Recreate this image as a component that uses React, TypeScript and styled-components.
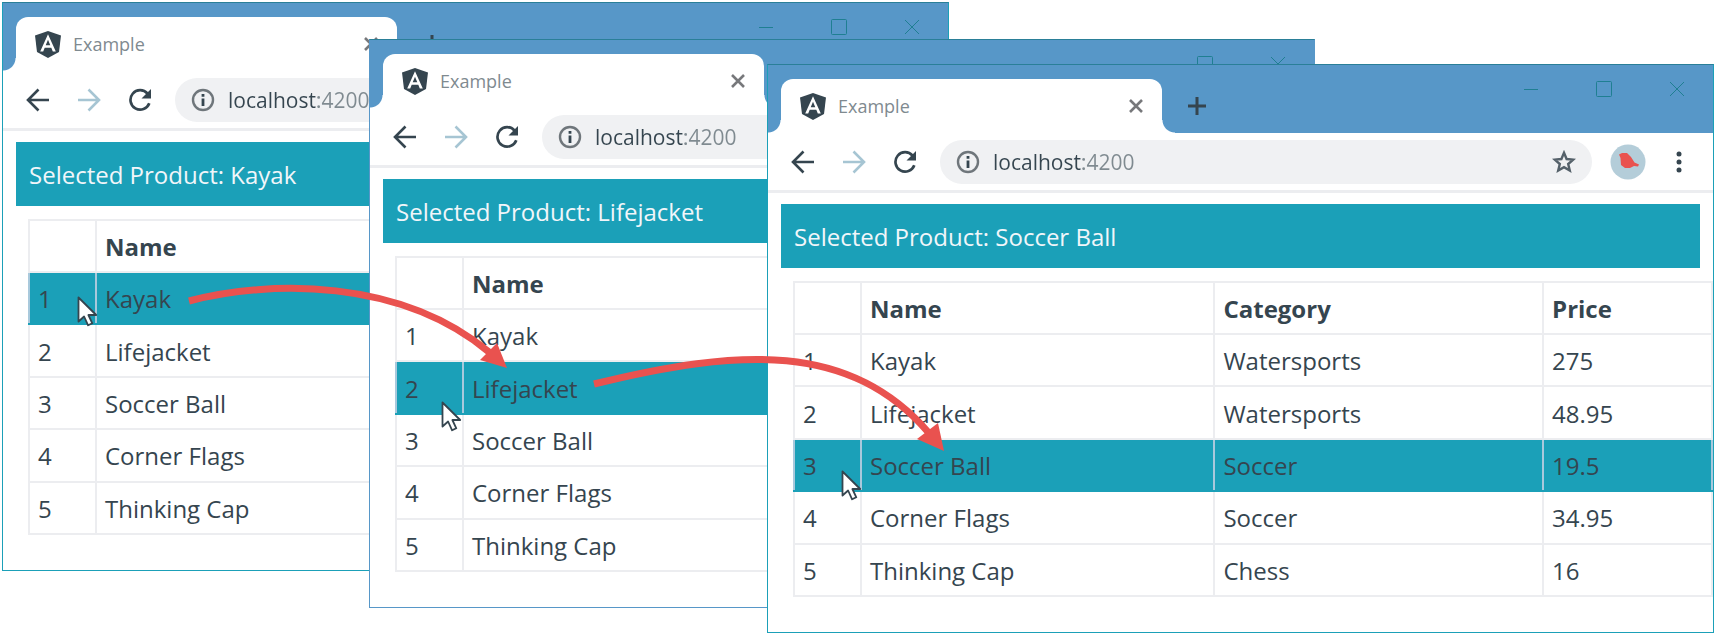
import React from "react";
import styled, { createGlobalStyle, css } from "styled-components";

const color = {
  ink: "#35454f",
  muted: "#7f8a90",
  pale: "#a6c5d3",
  frame: "#5797c8",
  teal: "#1ba0b8",
  line: "#ecedf0",
  field: "#f0f1f3",
  arrow: "#e9524f",
};

const GlobalStyle = createGlobalStyle`
  *, *::before, *::after { box-sizing: border-box; }
  body {
    margin: 0;
    background: #fff;
    color: ${color.ink};
    font-family: "Open Sans", "Noto Sans", sans-serif;
  }
  button { padding: 0; border: 0; background: none; color: inherit; font: inherit; }
`;

const Stage = styled.main`
  position: relative;
  display: grid;
  grid-template-columns: 367fr 398fr 182fr 366fr 399fr;
  align-items: start;
  padding: 2px;
`;

const BrowserFrame = styled.section<{ $start: number; $drop: number; $edge: string }>`
  isolation: isolate;
  grid-row: 1;
  grid-column: ${(p) => p.$start} / span 3;
  margin-top: ${(p) => p.$drop}px;
  min-width: 0;
  overflow: hidden;
  border: 1px solid ${(p) => p.$edge};
  border-top-color: #2a7f98;
  background: #fff;
`;

const TitleBar = styled.header`
  display: flex;
  align-items: flex-end;
  height: 68px;
  padding-left: 13px;
  background: ${color.frame};
`;

const foot = css`
  content: "";
  position: absolute;
  bottom: 0;
  width: 13px;
  height: 13px;
`;

const Tab = styled.div`
  position: relative;
  display: flex;
  align-items: center;
  width: 381px;
  height: 54px;
  padding: 0 18px 0 19px;
  border-radius: 12px 12px 0 0;
  background: #fff;
  &::before {
    ${foot}
    right: 100%;
    background: radial-gradient(circle at 0 0, transparent 12px, #fff 13px);
  }
  &::after {
    ${foot}
    left: 100%;
    background: radial-gradient(circle at 100% 0, transparent 12px, #fff 13px);
  }
`;

const TabTitle = styled.span`
  flex: 1;
  margin-left: 12px;
  color: ${color.muted};
  font-size: 18px;
  line-height: 24px;
`;

const TabButton = styled.button`
  display: grid;
  place-items: center;
  width: 16px;
  height: 16px;
  color: #77787b;
`;

const NewTabButton = styled.button`
  display: grid;
  place-items: center;
  width: 70px;
  height: 54px;
`;

const WindowButtons = styled.div`
  display: flex;
  align-self: flex-start;
  margin-left: auto;
`;

const WindowButton = styled.button`
  display: grid;
  place-items: center;
  width: 73px;
  height: 48px;
  color: #1f7f92;
`;

const Toolbar = styled.div`
  display: flex;
  align-items: center;
  height: 60px;
  padding: 0 9px;
  border-bottom: 3px solid ${color.line};
`;

const ToolButton = styled.button<{ $faded?: boolean }>`
  display: grid;
  place-items: center;
  flex: none;
  width: 51px;
  height: 44px;
  color: ${(p) => (p.$faded ? color.pale : color.ink)};
`;

const AddressBar = styled.label`
  display: flex;
  align-items: center;
  flex: 1;
  min-width: 0;
  height: 44px;
  margin: 0 10px;
  padding: 0 16px;
  border-radius: 22px;
  background: ${color.field};
  color: #6f767b;
`;

const AddressInput = styled.input`
  flex: 1;
  min-width: 0;
  margin: 0 13px;
  padding: 0;
  border: 0;
  outline: 0;
  background: linear-gradient(to right, ${color.ink} 90px, ${color.muted} 90px);
  background-clip: text;
  -webkit-background-clip: text;
  color: transparent;
  font: inherit;
  font-size: 21px;
  line-height: 28px;
`;

const StarButton = styled.button`
  display: grid;
  place-items: center;
  color: #55616a;
`;

const Page = styled.div`
  padding: 11px 13px 35px;
`;

const Banner = styled.h1`
  margin: 0;
  padding: 17px 13px 15px;
  background: ${color.teal};
  color: #f1f6fa;
  font-size: 24px;
  font-weight: 400;
  line-height: 32px;
`;

const TableArea = styled.div`
  margin: 13px -13px 0 12px;
`;

const Table = styled.table`
  width: 100%;
  height: 316px;
  table-layout: fixed;
  border-collapse: collapse;
  font-size: 24px;
  line-height: 26px;
`;

const Cell = styled.td<{ $share?: string }>`
  position: relative;
  width: ${(p) => p.$share ?? "auto"};
  padding: 13px 8px 11px;
  border: 2px solid ${color.line};
  text-align: left;
  white-space: nowrap;
`;

const Row = styled.tr<{ $selected?: boolean }>`
  ${(p) =>
    p.$selected &&
    css`
      background: ${color.teal};
      ${Cell} {
        border-color: ${color.teal} #a9c9dc;
      }
    `}
`;

const Pointer = styled.svg<{ $x: number; $y: number }>`
  position: absolute;
  z-index: 1;
  left: ${(p) => p.$x}px;
  top: ${(p) => p.$y}px;
`;

const Arrows = styled.svg`
  position: absolute;
  inset: 0;
  width: 100%;
  height: 635px;
  pointer-events: none;
`;

const AngularLogo = () => (
  <svg width="26" height="27" viewBox="0 0 26 27" aria-hidden="true">
    <path d="M13 0 26 4.500 24 21 13 27 2 21 0 4.500Z" fill={color.ink} />
    <path
      d="M13 3.200 5.200 20.500h3l1.500-3.800h6.600l1.500 3.800h3Zm0 5.600 2.300 5.400h-4.600Z"
      fill="#fff"
      fillRule="evenodd"
    />
  </svg>
);

const BackIcon = () => (
  <svg width="24" height="24" viewBox="0 0 24 24" fill="none" stroke="currentColor" strokeWidth="2.600">
    <path d="M23 12H2.500M12.500 1.500 2 12l10.500 10.500" />
  </svg>
);

const ForwardIcon = () => (
  <svg width="24" height="24" viewBox="0 0 24 24" fill="none" stroke="currentColor" strokeWidth="2.600">
    <path d="M1 12h20.500M11.500 1.500 22 12 11.500 22.500" />
  </svg>
);

const ReloadIcon = () => (
  <svg width="24" height="24" viewBox="0 0 24 24" fill="none">
    <path d="M19.500 5.500A9.700 9.700 0 1 0 21.300 15.200" stroke="currentColor" strokeWidth="2.700" />
    <path d="M23 1v9.500h-9.500Z" fill="currentColor" />
  </svg>
);

const InfoIcon = () => (
  <svg width="24" height="24" viewBox="0 0 24 24" fill="none" aria-hidden="true">
    <circle cx="12" cy="12" r="10" stroke="currentColor" strokeWidth="2.400" />
    <path d="M10.600 10.600h2.800V18h-2.800ZM10.600 6h2.800v2.800h-2.800Z" fill={color.ink} />
  </svg>
);

const StarIcon = () => (
  <svg width="24" height="24" viewBox="0 0 24 24" fill="none" stroke="currentColor" strokeWidth="2.400">
    <path d="M12 2.800 14.600 9l6.700.6-5.100 4.400 1.600 6.600L12 17.100l-5.800 3.500L7.800 14 2.700 9.600 9.400 9Z" />
  </svg>
);

const AvatarIcon = () => (
  <svg width="36" height="36" viewBox="0 0 36 36">
    <circle cx="18" cy="18" r="17.500" fill="#b4cdd9" />
    <path
      d="M9 10.500 12 9h5l4 4 3.500 5.500 4.500 2-1 2-4-.5-4 2h-5l-4-3-.5-7Z"
      fill={color.arrow}
    />
  </svg>
);

const MenuIcon = () => (
  <svg width="24" height="24" viewBox="0 0 24 24" fill="currentColor">
    <circle cx="12" cy="4" r="2.500" />
    <circle cx="12" cy="12" r="2.500" />
    <circle cx="12" cy="20" r="2.500" />
  </svg>
);

const MousePointer = ({ x, y }: { x: number; y: number }) => (
  <Pointer $x={x} $y={y} width="21" height="31" viewBox="0 0 21 31" aria-hidden="true">
    <path
      d="M1.500 1.500v24l5.600-5 4 8.800 4.200-2-3.900-8.300h7.800Z"
      fill="#fff"
      stroke={color.ink}
      strokeWidth="1.800"
      strokeLinejoin="round"
    />
  </Pointer>
);

type Product = { name: string; category?: string; price?: string };
type Column = { key: keyof Product; label: string; share?: string };

const nameColumn: Column = { key: "name", label: "Name" };
const allColumns: Column[] = [
  { ...nameColumn, share: "38.500%" },
  { key: "category", label: "Category", share: "35.800%" },
  { key: "price", label: "Price" },
];

const products: Product[] = [
  { name: "Kayak", category: "Watersports", price: "275" },
  { name: "Lifejacket", category: "Watersports", price: "48.95" },
  { name: "Soccer Ball", category: "Soccer", price: "19.5" },
  { name: "Corner Flags", category: "Soccer", price: "34.95" },
  { name: "Thinking Cap", category: "Chess", price: "16" },
];

type BrowserProps = {
  start: number;
  drop: number;
  edge: string;
  selected: number;
  pointer: { x: number; y: number };
  columns: Column[];
};

function BrowserWindow({ start, drop, edge, selected, pointer, columns }: BrowserProps) {
  return (
    <BrowserFrame $start={start} $drop={drop} $edge={edge}>
      <TitleBar>
        <Tab>
          <AngularLogo />
          <TabTitle>Example</TabTitle>
          <TabButton aria-label="Close tab">
            <svg width="14" height="14" viewBox="0 0 14 14" stroke="currentColor" strokeWidth="2.600">
              <path d="m1 1 12 12M13 1 1 13" />
            </svg>
          </TabButton>
        </Tab>
        <NewTabButton aria-label="New tab">
          <svg width="18" height="18" viewBox="0 0 18 18" stroke="currentColor" strokeWidth="3">
            <path d="M9 0v18M0 9h18" />
          </svg>
        </NewTabButton>
        <WindowButtons>
          <WindowButton aria-label="Minimize">
            <svg width="16" height="16" viewBox="0 0 16 16" stroke="currentColor">
              <path d="M1 8.500h14" />
            </svg>
          </WindowButton>
          <WindowButton aria-label="Maximize">
            <svg width="16" height="16" viewBox="0 0 16 16" fill="none" stroke="currentColor">
              <rect x=".5" y=".5" width="15" height="15" rx="1" />
            </svg>
          </WindowButton>
          <WindowButton aria-label="Close">
            <svg width="16" height="16" viewBox="0 0 16 16" stroke="currentColor">
              <path d="m1 1 14 14M15 1 1 15" />
            </svg>
          </WindowButton>
        </WindowButtons>
      </TitleBar>
      <Toolbar>
        <ToolButton aria-label="Back"><BackIcon /></ToolButton>
        <ToolButton aria-label="Forward" $faded><ForwardIcon /></ToolButton>
        <ToolButton aria-label="Reload"><ReloadIcon /></ToolButton>
        <AddressBar>
          <InfoIcon />
          <AddressInput type="text" aria-label="Address" defaultValue="localhost:4200" />
          <StarButton aria-label="Bookmark"><StarIcon /></StarButton>
        </AddressBar>
        <ToolButton aria-label="Profile"><AvatarIcon /></ToolButton>
        <ToolButton aria-label="Menu"><MenuIcon /></ToolButton>
      </Toolbar>
      <Page>
        <Banner>Selected Product: {products[selected].name}</Banner>
        <TableArea>
          <Table>
            <thead>
              <Row>
                <Cell as="th" $share="67px" />
                {columns.map((c) => (
                  <Cell as="th" scope="col" key={c.key} $share={c.share}>{c.label}</Cell>
                ))}
              </Row>
            </thead>
            <tbody>
              {products.map((p, i) => (
                <Row key={p.name} $selected={i === selected}>
                  <Cell>
                    {i + 1}
                    {i === selected && <MousePointer x={pointer.x} y={pointer.y} />}
                  </Cell>
                  {columns.map((c) => (
                    <Cell key={c.key}>{p[c.key]}</Cell>
                  ))}
                </Row>
              ))}
            </tbody>
          </Table>
        </TableArea>
      </Page>
    </BrowserFrame>
  );
}

export default function App() {
  return (
    <>
      <GlobalStyle />
      <Stage>
        <BrowserWindow start={1} drop={0} edge={color.teal} selected={0} pointer={{ x: 47, y: 23 }} columns={[nameColumn]} />
        <BrowserWindow start={2} drop={37} edge={color.frame} selected={1} pointer={{ x: 44, y: 39 }} columns={[nameColumn]} />
        <BrowserWindow start={3} drop={62} edge={color.teal} selected={2} pointer={{ x: 46, y: 30 }} columns={allColumns} />
        <Arrows viewBox="0 0 1716 635" preserveAspectRatio="none" aria-hidden="true">
          <g fill="none" stroke={color.arrow} strokeWidth="7">
            <path d="M189 301C270 280 400 278 489 352" />
            <path d="M594 384C740 348 850 342 928 432" />
          </g>
          <g fill={color.arrow}>
            <path d="M497 343 480 360 507 368Z" />
            <path d="M938 423 917 439 944 451Z" />
          </g>
        </Arrows>
      </Stage>
    </>
  );
}
